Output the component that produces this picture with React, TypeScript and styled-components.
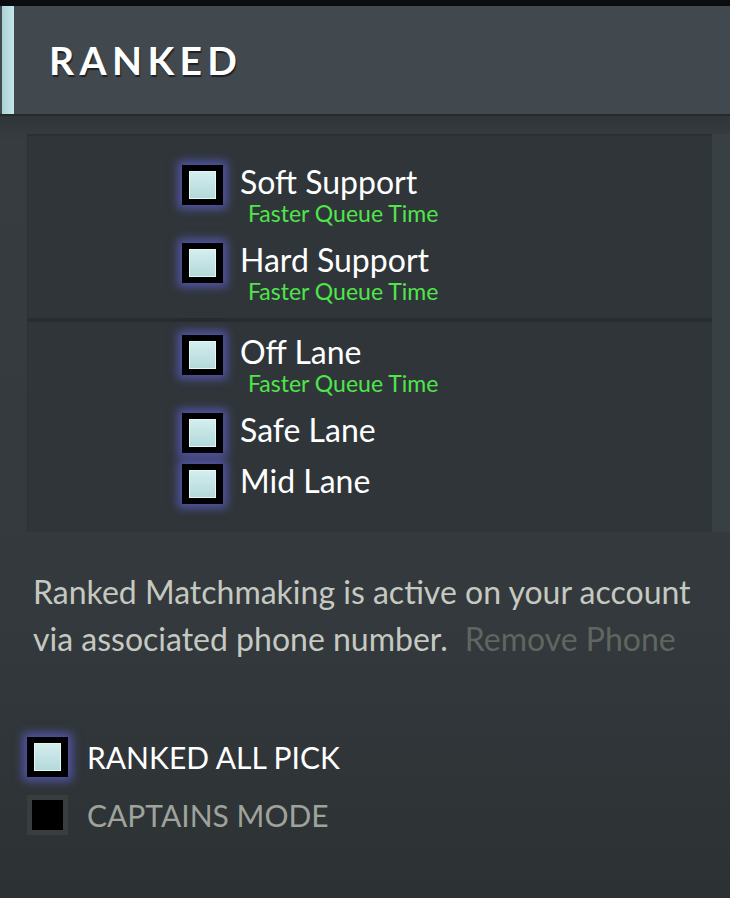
import React from 'react'
import styled, { createGlobalStyle } from 'styled-components'

const GlobalStyle = createGlobalStyle`
  html, body {
    margin: 0;
    padding: 0;
    background: #2c3134;
  }
  * {
    box-sizing: border-box;
  }
`

const Page = styled.div`
  width: 730px;
  height: 898px;
  overflow: hidden;
  display: flex;
  flex-direction: column;
  font-family: Lato, 'Open Sans', sans-serif;
  background: linear-gradient(180deg, #363c3f 0%, #33393c 50%, #2c3134 100%);
`

const TopBar = styled.div`
  height: 6px;
  background: #0a0c0e;
`

const Header = styled.div`
  height: 110px;
  display: flex;
  align-items: center;
  background: #41484e;
  border-bottom: 2px solid #24292c;
`

const Accent = styled.div`
  align-self: stretch;
  width: 12px;
  margin-left: 2px;
  background: linear-gradient(90deg, #a9d3d6, #c6e6e8);
`

const Title = styled.h1`
  margin: 0 0 0 35px;
  font-size: 39px;
  font-weight: 700;
  letter-spacing: 5.4px;
  color: #ffffff;
  text-shadow: 1px 2px 1px rgba(0, 0, 0, 0.55);
`

const Body = styled.div`
  flex: 1;
  padding: 18px 18px 0 27px;
  background: linear-gradient(180deg, #2f3538 0px, #363c3f 24px, #33393c 500px, #2c3134 100%);
`

const RolePanel = styled.div`
  width: 685px;
  background: #2f3538;
  border-top: 2px solid #2a2f32;
  border-left: 1px solid #2c3134;
  box-shadow: 18px 0 0 #394043;
`

const RoleGroup = styled.div<{ $top: number; $bottom: number }>`
  display: flex;
  flex-direction: column;
  gap: 11px;
  padding: ${({ $top, $bottom }) => `${$top}px 0 ${$bottom}px 154px`};
`

const Divider = styled.div`
  height: 4px;
  background: #272c2e;
`

const Row = styled.div`
  display: flex;
  align-items: flex-start;
`

const Box = styled.div<{ $disabled?: boolean }>`
  flex: none;
  width: 41px;
  height: 40px;
  padding: ${({ $disabled }) => ($disabled ? '5px' : '6px 7px')};
  background: ${({ $disabled }) => ($disabled ? '#383d3f' : '#000')};
  box-shadow: ${({ $disabled }) =>
    $disabled ? 'none' : '0 0 9px 4px rgba(92, 92, 196, 0.8)'};
`

const Fill = styled.div<{ $disabled?: boolean }>`
  width: 100%;
  height: 100%;
  background: ${({ $disabled }) =>
    $disabled ? '#000' : 'linear-gradient(180deg, #d3eeee 0%, #b4d9da 100%)'};
  border: ${({ $disabled }) => ($disabled ? 'none' : '1px solid #e6f6f6')};
`

const LabelCol = styled.div`
  margin-left: 17px;
  display: flex;
  flex-direction: column;
`

const RoleName = styled.div`
  font-size: 32px;
  line-height: 34px;
  color: #ffffff;
`

const Hint = styled.div`
  margin: 0 0 4px 8px;
  font-size: 23px;
  line-height: 29px;
  color: #4fe54b;
`

const Note = styled.div`
  margin: 36px 0 0 6px;
  font-size: 32px;
  line-height: 47px;
  color: #c6c9c1;
`

const NoteLine = styled.div`
  display: flex;
  gap: 17px;
`

const RemoveLink = styled.span`
  color: #5f6660;
`

const Modes = styled.div`
  margin-top: 75px;
  display: flex;
  flex-direction: column;
  gap: 18px;
`

const ModeLabel = styled.div<{ $disabled?: boolean }>`
  margin-left: 19px;
  font-size: 30px;
  line-height: 40px;
  color: ${({ $disabled }) => ($disabled ? '#9fa39b' : '#ffffff')};
`

const Check = ({ disabled }: { disabled?: boolean }) => (
  <Box $disabled={disabled}>
    <Fill $disabled={disabled} />
  </Box>
)

interface Role {
  name: string
  fast?: boolean
}

const topRoles: Role[] = [
  { name: 'Soft Support', fast: true },
  { name: 'Hard Support', fast: true },
]

const bottomRoles: Role[] = [
  { name: 'Off Lane', fast: true },
  { name: 'Safe Lane' },
  { name: 'Mid Lane' },
]

const RoleRow = ({ role }: { role: Role }) => (
  <Row>
    <Check />
    <LabelCol>
      <RoleName>{role.name}</RoleName>
      {role.fast && <Hint>Faster Queue Time</Hint>}
    </LabelCol>
  </Row>
)

export default function App() {
  return (
    <>
      <GlobalStyle />
      <Page>
        <TopBar />
        <Header>
          <Accent />
          <Title>RANKED</Title>
        </Header>
        <Body>
          <RolePanel>
            <RoleGroup $top={29} $bottom={8}>
              {topRoles.map(r => (
                <RoleRow key={r.name} role={r} />
              ))}
            </RoleGroup>
            <Divider />
            <RoleGroup $top={13} $bottom={28}>
              {bottomRoles.map(r => (
                <RoleRow key={r.name} role={r} />
              ))}
            </RoleGroup>
          </RolePanel>
          <Note>
            <NoteLine>
              <span>Ranked Matchmaking is active on your account</span>
            </NoteLine>
            <NoteLine>
              <span>via associated phone number.</span>
              <RemoveLink>Remove Phone</RemoveLink>
            </NoteLine>
          </Note>
          <Modes>
            <Row>
              <Check />
              <ModeLabel>RANKED ALL PICK</ModeLabel>
            </Row>
            <Row>
              <Check disabled />
              <ModeLabel $disabled>CAPTAINS MODE</ModeLabel>
            </Row>
          </Modes>
        </Body>
      </Page>
    </>
  )
}
